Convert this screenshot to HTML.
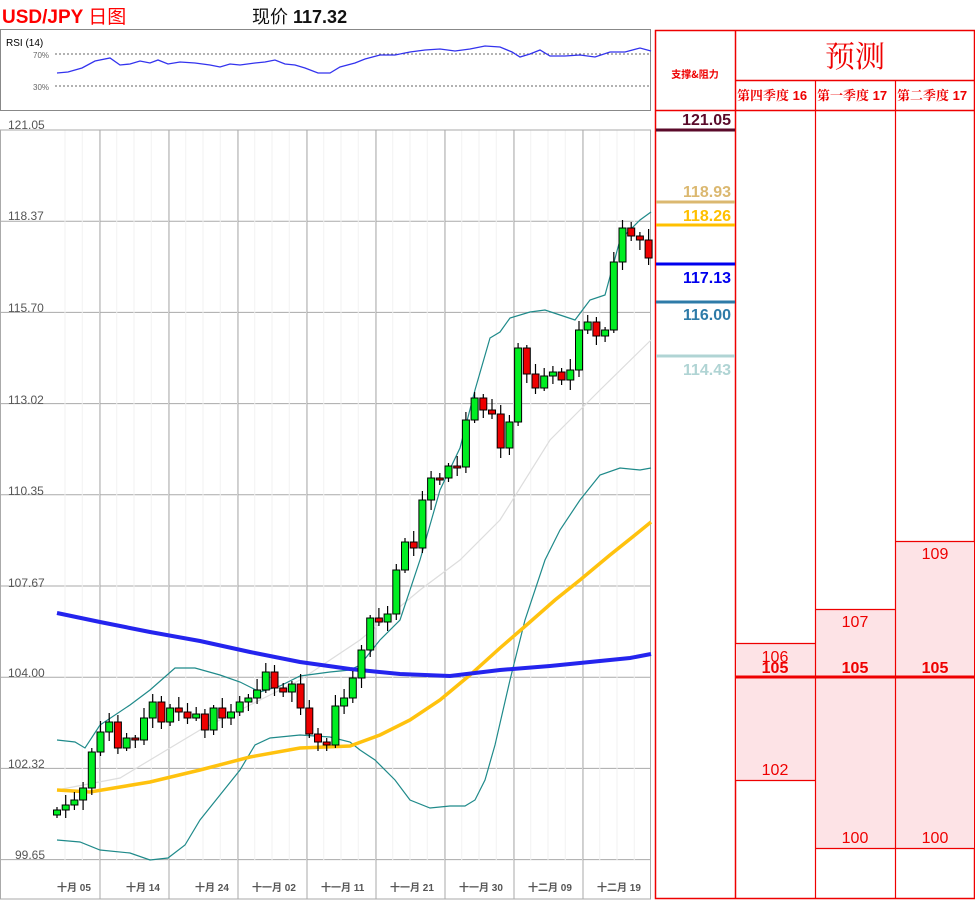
<!DOCTYPE html>
<html><head><meta charset="utf-8">
<style>
body{margin:0;width:975px;height:900px;background:#fff;position:relative;overflow:hidden;font-family:"Liberation Sans","Noto Sans CJK SC",sans-serif}
.a{position:absolute}
</style></head><body>
<div class="a" style="left:2px;top:2px;font-size:19px;font-weight:bold;color:#f00;font-family:'Liberation Sans','Noto Sans CJK SC',sans-serif">USD/JPY <span style="font-weight:normal">日图</span></div>
<div class="a" style="left:252px;top:3px;font-size:18px;color:#111">现价 <b>117.32</b></div>

<svg class="a" style="left:0;top:0" width="975" height="900" xmlns="http://www.w3.org/2000/svg">
<rect x="0.5" y="29.5" width="650" height="81" fill="#fff" stroke="#888"/>
<text x="6" y="46" font-size="10" font-family="Liberation Sans" fill="#000">RSI (14)</text>
<text x="33" y="58" font-size="8" fill="#666" font-family="Liberation Sans">70%</text>
<text x="33" y="90" font-size="8" fill="#666" font-family="Liberation Sans">30%</text>
<line x1="55" y1="54" x2="650" y2="54" stroke="#666" stroke-dasharray="2,2"/>
<line x1="55" y1="86" x2="650" y2="86" stroke="#666" stroke-dasharray="2,2"/>
<polyline fill="none" stroke="#3333ee" stroke-width="1.3" points="57,73 68,72 82,68 95,61 110,58 120,65 130,64 140,61 150,63 158,60 168,64 180,62 195,63 210,65 220,67 230,64 240,65 255,63 265,62 275,60 285,64 295,65 305,68 318,73 330,73 340,67 355,63 365,59 380,55 395,55 410,52 425,50 440,49 455,51 470,49 485,46 500,47 512,52 520,57 530,54 540,50 550,56 565,56 580,55 595,57 610,52 625,52 640,48 651,51"/>
<text x="8" y="129" font-size="12" fill="#555" font-family="Liberation Sans">121.05</text>
<g id="grid"></g>
<rect x="0.5" y="130" width="650" height="769" fill="none" stroke="#aaa"/>
<g font-size="12" fill="#555" font-family="Liberation Sans">
<text x="8" y="220">118.37</text><text x="8" y="312">115.70</text><text x="8" y="404">113.02</text>
<text x="8" y="495">110.35</text><text x="8" y="587">107.67</text><text x="8" y="677">104.00</text>
<text x="8" y="768">102.32</text><text x="15" y="859">99.65</text>
</g>
<g font-size="10" fill="#555" font-weight="bold" font-family="Liberation Sans,Noto Sans CJK SC">
<text x="57" y="891">十月 05</text><text x="126" y="891">十月 14</text><text x="195" y="891">十月 24</text>
<text x="252" y="891">十一月 02</text><text x="321" y="891">十一月 11</text><text x="390" y="891">十一月 21</text>
<text x="459" y="891">十一月 30</text><text x="528" y="891">十二月 09</text><text x="597" y="891">十二月 19</text>
</g>
<polyline fill="none" stroke="#ddd" stroke-width="1.2" points="57,790 120,778 200,730 250,705 300,680 360,640 420,590 460,560 500,520 550,440 600,390 651,340"/>
<polyline fill="none" stroke="#1f8a8a" stroke-width="1.2" points="57,740 75,742 85,748 100,725 130,705 150,690 175,668 195,668 220,675 240,682 260,692 280,686 300,676 330,672 350,670 360,665 380,640 400,620 420,560 440,490 460,448 475,390 490,338 500,332 510,318 530,312 545,310 560,315 575,320 590,300 605,295 620,240 640,220 651,212"/>
<polyline fill="none" stroke="#1f8a8a" stroke-width="1.2" points="57,840 80,842 100,850 130,853 150,860 168,858 185,845 200,820 220,795 240,770 255,745 270,738 300,735 330,737 350,742 360,750 375,760 395,780 410,800 430,808 450,806 465,806 475,800 485,780 495,745 510,680 525,620 545,560 560,530 580,500 600,475 620,468 640,470 651,468"/>
<polyline fill="none" stroke="#ffc20e" stroke-width="3.5" points="57,790 90,792 150,782 200,770 250,757 300,748 350,746 380,735 410,720 440,700 470,675 500,648 530,622 555,600 580,580 610,555 635,535 651,522"/>
<polyline fill="none" stroke="#2424ee" stroke-width="4" points="57,613 100,622 150,632 200,641 250,652 300,662 350,669 400,674 450,676 500,670 550,666 600,661 630,658 651,654"/>
<g id="cand"></g>

<g fill="none" stroke="#e00" stroke-width="1.5">
<rect x="655.5" y="30.5" width="319" height="868"/>
<line x1="735.5" y1="30" x2="735.5" y2="899"/>
<line x1="735" y1="80.5" x2="975" y2="80.5"/>
<line x1="655" y1="110.5" x2="975" y2="110.5"/>
</g>
<rect x="736" y="643" width="79" height="137" fill="#fde3e6"/>
<rect x="816" y="609" width="79" height="239" fill="#fde3e6"/>
<rect x="896" y="541" width="78" height="307" fill="#fde3e6"/>
<g stroke="#e00" stroke-width="1.2">
<line x1="735" y1="643.5" x2="815" y2="643.5"/><line x1="735" y1="780.5" x2="815" y2="780.5"/>
<line x1="815" y1="609.5" x2="895" y2="609.5"/><line x1="815" y1="848.5" x2="975" y2="848.5"/>
<line x1="895" y1="541.5" x2="975" y2="541.5"/>
<line x1="815.5" y1="80" x2="815.5" y2="899"/><line x1="895.5" y1="80" x2="895.5" y2="899"/>
</g>
<line x1="735" y1="677" x2="975" y2="677" stroke="#e00" stroke-width="3"/>
<text x="855" y="67" font-size="30" fill="#e00" text-anchor="middle" font-family="Noto Serif CJK SC,serif">预测</text>
<text x="695" y="78" font-size="10" fill="#e00" font-weight="bold" text-anchor="middle" font-family="Noto Sans CJK SC,sans-serif">支撑&amp;阻力</text>
<g font-size="13" font-weight="bold" fill="#e00" font-family="Liberation Sans,Noto Serif CJK SC,serif">
<text x="737" y="100">第四季度 16</text><text x="817" y="100">第一季度 17</text><text x="897" y="100">第二季度 17</text>
</g>
<g font-size="16" font-weight="bold" text-anchor="end" font-family="Liberation Sans">
<text x="731" y="125" fill="#5a0a2a">121.05</text>
<text x="731" y="197" fill="#dbb870">118.93</text>
<text x="731" y="221" fill="#ffc000">118.26</text>
<text x="731" y="283" fill="#0000ee">117.13</text>
<text x="731" y="320" fill="#2e7ba8">116.00</text>
<text x="731" y="375" fill="#b0d4d4">114.43</text>
</g>
<g stroke-width="3">
<line x1="656" y1="130" x2="735" y2="130" stroke="#5a0a2a"/>
<line x1="656" y1="202" x2="735" y2="202" stroke="#dbb870"/>
<line x1="656" y1="225" x2="735" y2="225" stroke="#ffc000"/>
<line x1="656" y1="264" x2="735" y2="264" stroke="#0000ee"/>
<line x1="656" y1="302" x2="735" y2="302" stroke="#2e7ba8"/>
<line x1="656" y1="356" x2="735" y2="356" stroke="#b0d4d4"/>
</g>
<g font-size="16" fill="#e00" text-anchor="middle" font-family="Liberation Sans">
<text x="775" y="662">106</text><text x="775" y="775">102</text>
<text x="855" y="627">107</text><text x="855" y="843">100</text>
<text x="935" y="559">109</text><text x="935" y="843">100</text>
</g>
<g font-size="16" fill="#e00" font-weight="bold" text-anchor="middle" font-family="Liberation Sans">
<text x="775" y="673">105</text><text x="855" y="673">105</text><text x="935" y="673">105</text>
</g>
</svg>
<script>
(function(){
var ns="http://www.w3.org/2000/svg";
function el(p,t,a){var e=document.createElementNS(ns,t);for(var k in a)e.setAttribute(k,a[k]);p.appendChild(e);return e;}
var g=document.getElementById('grid');
for(var i=0;i<9;i++){var y=130+i*91.2;el(g,'line',{x1:0,x2:651,y1:y,y2:y,stroke:'#aaa','stroke-width':1});}
for(var xx=65;xx<651;xx+=17.25){el(g,'line',{x1:xx,x2:xx,y1:130,y2:860,stroke:'#f2f2f2','stroke-width':1});}
for(var xx=100;xx<651;xx+=69){el(g,'line',{x1:xx,x2:xx,y1:130,y2:899,stroke:'#aaa','stroke-width':1});}
var c=[810,805,800,788,752,732,722,748,738,740,718,702,722,708,712,718,714,730,708,718,712,702,698,690,672,688,692,684,708,734,742,745,706,698,678,650,618,622,614,570,542,548,500,478,478,466,467,420,398,410,414,448,422,348,374,388,376,372,380,370,330,322,336,330,262,228,236,240,258];
var cg=document.getElementById('cand');var prev=815;
for(var i=0;i<c.length;i++){var cx=57+i*8.7;var o=prev,cl=c[i];var t0=Math.min(o,cl),b0=Math.max(o,cl);
var hi=t0-3-(i*7%9),lo=b0+3+(i*5%8);
el(cg,'line',{x1:cx,x2:cx,y1:hi,y2:lo,stroke:'#000','stroke-width':1.2});
var h=Math.max(b0-t0,2);
el(cg,'rect',{x:cx-3.5,y:t0,width:7,height:h,fill:cl<o?'#00ee22':'#ee0000',stroke:'#000','stroke-width':1});
prev=cl;}
})();
</script>
</body></html>
